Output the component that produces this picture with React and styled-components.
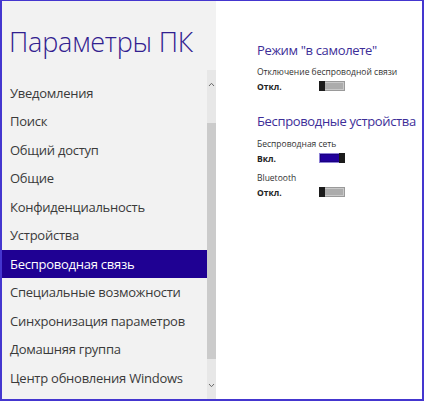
import React from "react";
import styled, { createGlobalStyle } from "styled-components";

const GlobalStyle = createGlobalStyle`
html, body {
  margin: 0;
  padding: 0;
  background: #ffffff;
}
body {
  font-family: "Open Sans", "Noto Sans", "DejaVu Sans", sans-serif;
}
`;

const Frame = styled.div`
width: 424px;
height: 401px;
box-sizing: border-box;
border: 2px solid #4436cf;
border-top-width: 1px;
display: flex;
overflow: hidden;
background: #ffffff;
`;

const Sidebar = styled.div`
width: 214px;
flex-shrink: 0;
background: #f2f2f2;
display: flex;
flex-direction: column;
`;

const Title = styled.div`
height: 69px;
box-sizing: border-box;
padding: 23px 0 0 7px;
font-size: 27px;
font-weight: 300;
line-height: 36px;
color: #31208f;
white-space: nowrap;
letter-spacing: -0.2px;
`;

const ListArea = styled.div`
flex: 1;
display: flex;
min-height: 0;
`;

const Menu = styled.ul`
list-style: none;
margin: 0;
padding: 8.75px 0 0 0;
flex: 1;
`;

const MenuItem = styled.li`
height: 28.5px;
line-height: 28.5px;
padding-left: 8px;
font-size: 13px;
letter-spacing: -0.25px;
color: ${(p) => (p.$active ? "#ffffff" : "#3a3a3a")};
background: ${(p) => (p.$active ? "#1f0193" : "transparent")};
white-space: nowrap;
`;

const Scrollbar = styled.div`
width: 9px;
background: #e7e7e7;
display: flex;
flex-direction: column;
align-items: center;
`;

const Arrow = styled.div`
height: 28px;
display: flex;
align-items: center;
justify-content: center;
color: #6a6a6a;
`;

const ScrollThumb = styled.div`
width: 9px;
height: 236px;
margin-top: 25px;
background: #cbcbcb;
`;

const Spacer = styled.div`
flex: 1;
`;

const Content = styled.div`
flex: 1;
padding: 39px 0 0 41px;
display: flex;
flex-direction: column;
`;

const Heading = styled.div`
font-size: 13px;
line-height: 20px;
letter-spacing: -0.35px;
color: #3d2e98;
white-space: nowrap;
margin-top: ${(p) => p.$top || 0}px;
`;

const Label = styled.div`
font-size: 8.5px;
line-height: 12px;
color: #333333;
margin-top: ${(p) => p.$top || 0}px;
white-space: nowrap;
`;

const ValueRow = styled.div`
display: flex;
align-items: center;
height: 12px;
margin-top: 2px;
`;

const ValueText = styled.div`
width: 62px;
font-size: 8.5px;
font-weight: 700;
color: #222222;
`;

const Toggle = styled.div`
width: 26px;
height: 10px;
box-sizing: border-box;
display: flex;
flex-direction: ${(p) => (p.$on ? "row-reverse" : "row")};
background: ${(p) => (p.$on ? "#21009c" : "#acacac")};
border: 1px solid ${(p) => (p.$on ? "#8d80d6" : "#9a9a9a")};
box-shadow: inset 0 0 0 1px ${(p) => (p.$on ? "#1a0080" : "#c8c8c8")};
`;

const Knob = styled.div`
width: 6px;
height: 10px;
margin: -1px;
background: #1b1b1b;
`;

const ChevronUp = () => (
  <svg width="7" height="5" viewBox="0 0 7 5">
    <path d="M1 4 L3.5 1.3 L6 4" fill="none" stroke="currentColor" strokeWidth="1" />
  </svg>
);

const ChevronDown = () => (
  <svg width="7" height="5" viewBox="0 0 7 5">
    <path d="M1 1 L3.5 3.7 L6 1" fill="none" stroke="currentColor" strokeWidth="1" />
  </svg>
);

const items = [
  "Уведомления",
  "Поиск",
  "Общий доступ",
  "Общие",
  "Конфиденциальность",
  "Устройства",
  "Беспроводная связь",
  "Специальные возможности",
  "Синхронизация параметров",
  "Домашняя группа",
  "Центр обновления Windows",
];

const App = () => {
  return (
    <>
      <GlobalStyle />
      <Frame>
        <Sidebar>
          <Title>Параметры ПК</Title>
          <ListArea>
            <Menu>
              {items.map((it) => (
                <MenuItem key={it} $active={it === "Беспроводная связь"}>
                  {it}
                </MenuItem>
              ))}
            </Menu>
            <Scrollbar>
              <Arrow>
                <ChevronUp />
              </Arrow>
              <ScrollThumb />
              <Spacer />
              <Arrow>
                <ChevronDown />
              </Arrow>
            </Scrollbar>
          </ListArea>
        </Sidebar>
        <Content>
          <Heading>Режим "в самолете"</Heading>
          <Label $top={6}>Отключение беспроводной связи</Label>
          <ValueRow>
            <ValueText>Откл.</ValueText>
            <Toggle>
              <Knob />
            </Toggle>
          </ValueRow>
          <Heading $top={19}>Беспроводные устройства</Heading>
          <Label $top={7}>Беспроводная сеть</Label>
          <ValueRow>
            <ValueText>Вкл.</ValueText>
            <Toggle $on>
              <Knob />
            </Toggle>
          </ValueRow>
          <Label $top={8}>Bluetooth</Label>
          <ValueRow>
            <ValueText>Откл.</ValueText>
            <Toggle>
              <Knob />
            </Toggle>
          </ValueRow>
        </Content>
      </Frame>
    </>
  );
};

export default App;
